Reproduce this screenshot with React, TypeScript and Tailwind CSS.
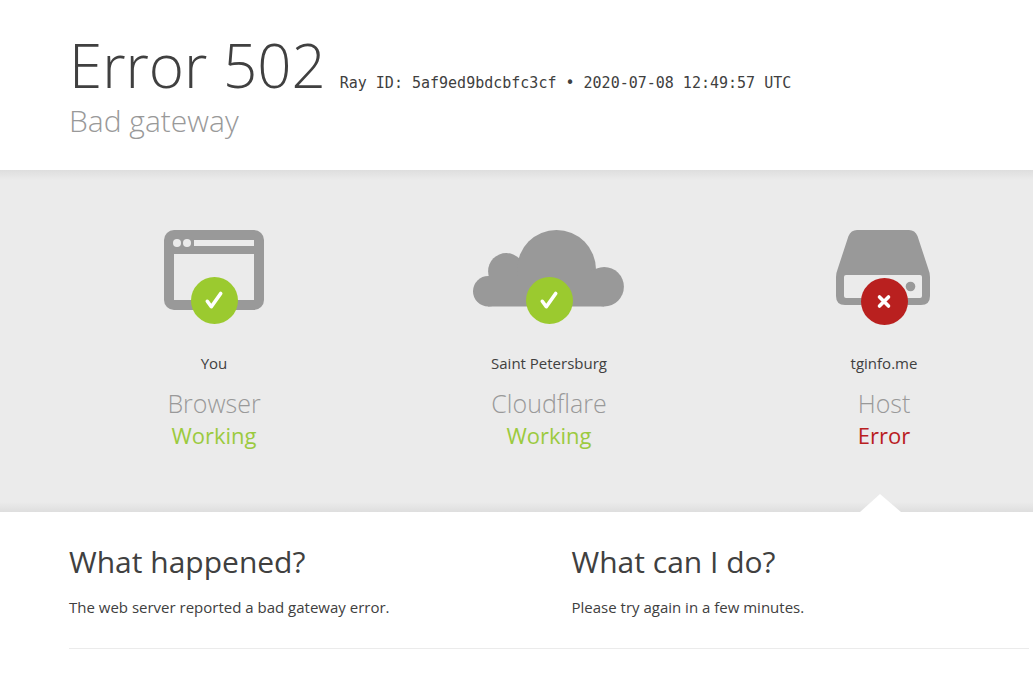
import type { ReactNode } from 'react';

function BrowserIcon() {
  return (
    <svg width="100" height="80" viewBox="0 0 100 80" aria-hidden="true">
      <rect width="100" height="80" rx="10" fill="#999" />
      <g fill="#ebebeb">
        <circle cx="13" cy="13" r="4" />
        <circle cx="23" cy="13" r="4" />
        <rect x="30" y="10" width="60" height="6" />
        <rect x="10" y="24" width="80" height="46" />
      </g>
    </svg>
  );
}

function CloudIcon() {
  return (
    <svg width="152" height="77" viewBox="0 0 152 77" fill="#999" aria-hidden="true">
      <circle cx="15.300" cy="61.200" r="15.300" />
      <circle cx="33.300" cy="41.200" r="18.200" />
      <circle cx="83.500" cy="39.500" r="39.500" />
      <circle cx="131.200" cy="56.800" r="19.700" />
      <rect x="15" y="46" width="116" height="30.500" />
    </svg>
  );
}

function HostIcon() {
  return (
    <svg width="96" height="75" viewBox="0 0 96 75" aria-hidden="true">
      <path
        fill="#999"
        d="M21 0H73Q79 0 81.500 6L92 38Q94 43 94 47V66Q94 75 85 75H9Q0 75 0 66V47Q0 43 2 38L12.500 6Q15 0 21 0Z"
      />
      <rect x="8" y="45" width="78" height="23" rx="2" fill="#ebebeb" />
      <circle cx="74.500" cy="56.500" r="4.800" fill="#999" />
    </svg>
  );
}

function Badge({ ok }: { ok: boolean }) {
  return (
    <svg
      className={`absolute left-1/2 -translate-x-1/2 ${ok ? 'top-[47px]' : 'top-12'}`}
      width="48"
      height="48"
      viewBox="0 0 48 48"
      aria-hidden="true"
    >
      <circle cx="24.500" cy="23.500" r="23.500" fill={ok ? '#9bca2f' : '#b9201f'} />
      {ok ? (
        <path
          d="M17.300 24.300L21.300 29.700L30.700 16.500"
          fill="none"
          stroke="#fff"
          strokeWidth="3.600"
          strokeLinecap="round"
          strokeLinejoin="round"
        />
      ) : (
        <path
          d="M19.500 19L28.500 28M28.500 19L19.500 28"
          stroke="#fff"
          strokeWidth="3.600"
          strokeLinecap="round"
        />
      )}
    </svg>
  );
}

type StatusProps = {
  icon: ReactNode;
  place: string;
  name: string;
  ok: boolean;
};

function Status({ icon, place, name, ok }: StatusProps) {
  return (
    <div className="text-center">
      <div className="relative flex h-[95px] items-start justify-center">
        {icon}
        <Badge ok={ok} />
      </div>
      <span className="mt-6 block text-[15px] leading-7">{place}</span>
      <h3 className="mt-2.5 text-[25px] leading-8 font-light text-[#999]">{name}</h3>
      <span className={`block text-[22px] leading-8 ${ok ? 'text-[#9bca3e]' : 'text-[#b9201f]'}`}>
        {ok ? 'Working' : 'Error'}
      </span>
    </div>
  );
}

export default function App() {
  return (
    <div className="min-h-screen bg-white font-['Open_Sans',sans-serif] text-[#404040]">
      <header className="max-w-[1033px] pt-[34px] pr-1 pb-[30px] pl-[69px]">
        <h1 className="flex flex-wrap items-baseline gap-x-3.5">
          <span className="text-[60px] leading-[62px] font-light">Error 502</span>
          <span className="font-['DejaVu_Sans_Mono',monospace] text-[15px]">
            Ray ID: 5af9ed9bdcbfc3cf &bull; 2020-07-08 12:49:57 UTC
          </span>
        </h1>
        <h2 className="mt-1.5 text-[30px] leading-[38px] font-light text-[#999]">Bad gateway</h2>
      </header>

      <section className="relative bg-[linear-gradient(to_bottom,#dedede,#ebebeb_10px,#ebebeb_calc(100%-10px),#dedede)]">
        <div className="grid max-w-[1033px] grid-cols-3 gap-[45px] pt-[60px] pr-1 pb-[61px] pl-[69px]">
          <Status icon={<BrowserIcon />} place="You" name="Browser" ok />
          <Status icon={<CloudIcon />} place="Saint Petersburg" name="Cloudflare" ok />
          <Status icon={<HostIcon />} place="tginfo.me" name="Host" ok={false} />
        </div>
        <svg
          className="absolute bottom-0 left-[860px]"
          width="41"
          height="18"
          viewBox="0 0 41 18"
          aria-hidden="true"
        >
          <path d="M0 18L20 0L41 18Z" fill="#fff" />
        </svg>
      </section>

      <main className="max-w-[1033px] pt-[30px] pr-1 pl-[69px]">
        <div className="grid grid-cols-2 gap-[45px]">
          <div>
            <h2 className="text-[30px] leading-10">What happened?</h2>
            <p className="mt-[11px] text-[15px] leading-7">The web server reported a bad gateway error.</p>
          </div>
          <div>
            <h2 className="text-[30px] leading-10">What can I do?</h2>
            <p className="mt-[11px] text-[15px] leading-7">Please try again in a few minutes.</p>
          </div>
        </div>
        <hr className="mt-[27px] border-[#ebebeb]" />
      </main>
    </div>
  );
}
